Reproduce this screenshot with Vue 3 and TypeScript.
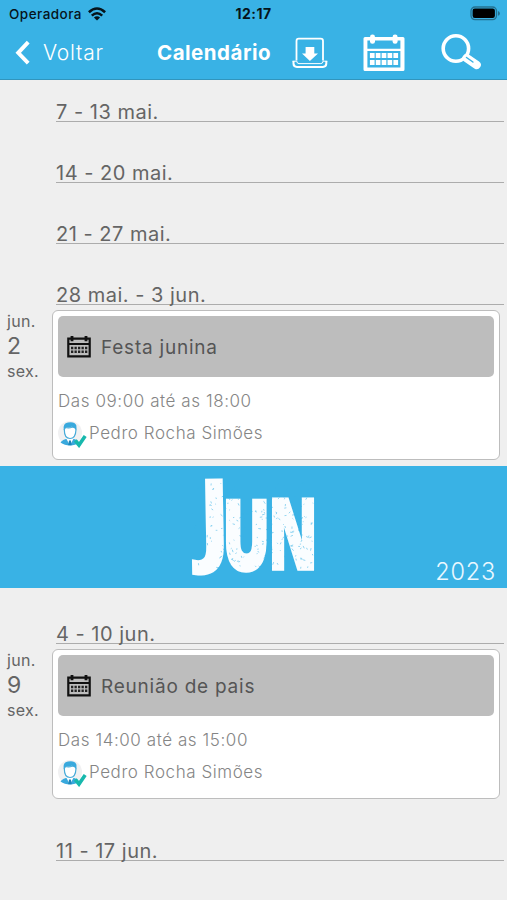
<script setup lang="ts">
interface CalendarEvent {
  month: string
  day: number
  weekday: string
  title: string
  time: string
  author: string
}
interface Week {
  label: string
  size?: 'first' | 'short'
  event?: CalendarEvent
  monthAfter?: boolean
}

const weeks: Week[] = [
  { label: '7 - 13 mai.', size: 'first' },
  { label: '14 - 20 mai.' },
  { label: '21 - 27 mai.' },
  {
    label: '28 mai. - 3 jun.',
    event: { month: 'jun.', day: 2, weekday: 'sex.', title: 'Festa junina', time: 'Das 09:00 até as 18:00', author: 'Pedro Rocha Simões' },
    monthAfter: true,
  },
  {
    label: '4 - 10 jun.',
    size: 'short',
    event: { month: 'jun.', day: 9, weekday: 'sex.', title: 'Reunião de pais', time: 'Das 14:00 até as 15:00', author: 'Pedro Rocha Simões' },
  },
  { label: '11 - 17 jun.', size: 'short' },
]

// Worn-print flecks over the month lettering
let seed = 71
const random = () => {
  seed = (seed * 16807) % 2147483647
  return seed / 2147483647
}
const flecks = Array.from({ length: 260 }, () => ({
  x: (3 + random() * 120).toFixed(1),
  y: (4 + random() * 92).toFixed(1),
  angle: Math.round(random() * 180),
  length: (0.8 + random() * 2).toFixed(1),
}))
</script>

<template>
  <div class="screen">
    <header class="header">
      <div class="status">
        <div class="carrier">
          <span>Operadora</span>
          <svg width="18" height="14" viewBox="0 0 18 14">
            <g fill="none" stroke="#06141b" stroke-width="2.6">
              <path d="M.9 5.2Q9-2.2 17.1 5.2" />
              <path d="M3.8 8.6Q9 3.9 14.2 8.6" />
            </g>
            <path d="M9 13.4 5.9 10.5Q9 8 12.1 10.5Z" fill="#06141b" />
          </svg>
        </div>
        <span class="clock">12:17</span>
        <svg class="battery" width="31" height="15" viewBox="0 0 31 15">
          <rect x="1" y="1" width="25.5" height="12.6" rx="4" fill="none" stroke="#247190" stroke-width="1.3" />
          <rect x="2.6" y="2.6" width="22.3" height="9.4" rx="2.2" fill="#000" />
          <path d="M28 5v4.8q1.9-.8 1.9-2.4T28 5Z" fill="#247190" />
        </svg>
      </div>
      <nav class="nav">
        <div class="back">
          <svg width="16" height="26" viewBox="0 0 16 26"><path d="M13.2 2.2 3.2 12.8l10 10.4" fill="none" stroke="#fff" stroke-width="3.9" /></svg>
          <span>Voltar</span>
        </div>
        <h1>Calendário</h1>
        <svg class="download" width="36" height="32" viewBox="0 0 36 32">
          <path d="M4.500 23.500V4q0-2.300 2.300-2.300h21.900q2.300 0 2.300 2.300v19.500" fill="none" stroke="#fff" stroke-width="1.800" />
          <path d="M1.500 24v2.500q0 3.400 3.400 3.400h26q3.400 0 3.400-3.400V24" fill="none" stroke="#fff" stroke-width="2" />
          <path d="M.5 24.200h4.300q0 2.400 2.200 2.400h21.800q2.200 0 2.200-2.400h4.300" fill="none" stroke="#fff" stroke-width="1" />
          <path d="M13.600 10h8.700v6.500h3.700L17.900 24 10 16.500h3.600Z" fill="#fff" />
        </svg>
        <svg class="cal" width="42" height="38" viewBox="0 0 42 38">
          <path fill="#fff" fill-rule="evenodd" d="M2 3h38q1.500 0 1.500 1.500v31q0 1.500-1.500 1.500H2Q.5 37 .5 35.500v-31Q.5 3 2 3ZM4.400 6.500v8.200h33V6.500ZM4.400 17v16.500h33V17Z" />
          <rect x="7" y="0.500" width="5" height="9.300" rx="2.400" fill="#fff" /><rect x="29.600" y="0.500" width="5" height="9.300" rx="2.400" fill="#fff" />
          <path d="M6.900 21.400h28.200M6.900 28.400h28.200" stroke="#fff" stroke-width="5" stroke-dasharray="4.700 1.175" />
        </svg>
        <svg class="search" width="41" height="37" viewBox="0 0 41 37">
          <circle cx="14.900" cy="15.500" r="12.700" fill="none" stroke="#fff" stroke-width="3.600" />
          <path d="m25.500 25 10.200 7" stroke="#fff" stroke-width="8.200" stroke-linecap="round" />
          <path d="m25.500 24.500 6.400 4.500" stroke="#39b2e5" stroke-width="1.500" stroke-linecap="round" />
        </svg>
      </nav>
    </header>

    <main>
      <template v-for="week in weeks" :key="week.label">
        <div class="week" :class="week.size"><span>{{ week.label }}</span></div>
        <div v-if="week.event" class="entry">
          <div class="date">
            <span>{{ week.event.month }}</span>
            <strong>{{ week.event.day }}</strong>
            <span>{{ week.event.weekday }}</span>
          </div>
          <article class="card">
            <div class="title">
              <svg width="24" height="22" viewBox="0 0 24 22">
                <path d="M1.300 2.700h21.400v17.600H1.300ZM1.300 8h21.400" fill="none" stroke="#111" stroke-width="2.200" />
                <path d="M5 0v5.200M19 0v5.200" stroke="#111" stroke-width="2.800" />
                <path d="M4 12h16.500M4 15.800h16.500" stroke="#222" stroke-width="2.400" stroke-dasharray="2.300 1.200" />
              </svg>
              <h2>{{ week.event.title }}</h2>
            </div>
            <p class="time">{{ week.event.time }}</p>
            <p class="author">
              <svg width="29" height="28" viewBox="0 0 29 28">
                <circle cx="12" cy="13" r="12" fill="#f1f1f2" />
                <path d="M2.500 22.500q2-3 7-4h5q5 1 6.500 4-3.500 3-9 3t-9.500-3Z" fill="#39a9dd" />
                <path d="m8 18 3.900 7.500 4-7.500Z" fill="#fff" /><path d="m11 20.500-.8 4.800h3.500l-.8-4.800Z" fill="#1f86ba" />
                <path d="M6.300 9.500Q6.300 18.500 12 18.500T18 9.500Q17.800 7.500 14.500 7 11 8.500 7.500 7.500Z" fill="#fff" stroke="#46abd9" stroke-width="1.200" />
                <path d="M5.800 10Q4.600 3.200 10 2.500q6.500-1.300 8.300 2.700.5 2.200-.2 4.800-1.300-3-4.200-3.300-4 1-6.300.5-.8 1-1.800 2.800Z" fill="#39a9dd" />
                <path d="m17.300 20.500 3.700 4.600 6.200-9" fill="none" stroke="#17b8ad" stroke-width="3.600" />
              </svg>
              <span>{{ week.event.author }}</span>
            </p>
          </article>
        </div>
        <section v-if="week.monthAfter" class="month">
          <svg class="lettering" width="127" height="102" viewBox="0 0 127 102">
            <g class="letters">
              <text class="j" transform="translate(9 75.500) rotate(-1) scale(.88 1)">J</text>
              <text class="u" transform="translate(32.400 92.500) scale(.64 1)">U</text>
              <text class="n" transform="translate(78.600 92) scale(.6 1)">N</text>
            </g>
            <path v-for="(f, i) in flecks" :key="i" :d="`M${f.x} ${f.y}h${f.length}`" :transform="`rotate(${f.angle} ${f.x} ${f.y})`" stroke="#39b2e5" stroke-width=".5" />
          </svg>
          <span class="year">2023</span>
        </section>
      </template>
    </main>
  </div>
</template>

<style>
body { margin: 0; background: #efefef; }
</style>

<style scoped>
.screen { width: 507px; height: 900px; overflow: hidden; background: #efefef; color: #656565; font-family: Inter, "Open Sans", sans-serif; }
h1, h2, p { margin: 0; font-weight: 400; }
svg { display: block; flex: none; }
.header { box-sizing: border-box; height: 80px; background: #39b2e5; border-bottom: 1.500px solid #3195bd; color: #fff; }
.status { display: grid; grid-template-columns: 1fr auto 1fr; align-items: center; height: 27px; color: #06141b; }
.carrier { display: flex; align-items: center; gap: 6px; padding-left: 9px; font-size: 13.500px; letter-spacing: .47px; font-weight: 500; }
.clock { font-size: 14px; font-weight: 700; letter-spacing: .5px; }
.battery { justify-self: end; margin-right: 6px; }
.nav { display: flex; align-items: center; height: 51px; }
.back { display: flex; align-items: center; gap: 12px; width: 142px; padding-left: 15px; font-size: 21px; font-weight: 300; letter-spacing: .75px; }
h1 { width: 135px; font-size: 20.500px; font-weight: 700; letter-spacing: .5px; white-space: nowrap; }
.cal { margin-left: 35px; }
.search { margin-left: 36px; margin-top: -2px; }
.week { box-sizing: border-box; display: flex; align-items: flex-end; height: 61px; margin: 0 3px 0 56px; border-bottom: 1.500px solid #acacac; font-size: 20px; line-height: 18px; letter-spacing: .5px; white-space: nowrap; }
.week.first { height: 42px; }
.week.short { height: 56px; }
.entry { display: flex; box-sizing: border-box; height: 161px; padding-top: 5px; }
.date { display: flex; flex-direction: column; width: 45px; padding: 1px 0 0 7px; font-size: 16px; line-height: 20px; letter-spacing: .3px; }
.date strong { font-size: 23px; font-weight: 400; line-height: 30px; }
.card { box-sizing: border-box; width: 448px; height: 150px; padding: 5px; background: #fff; border: 1.500px solid #bdbdbd; border-radius: 6px; }
.title { display: flex; align-items: center; gap: 10px; box-sizing: border-box; height: 61px; padding-left: 9px; background: #bdbdbd; border-radius: 5px; color: #555; }
h2 { padding-top: 3px; font-size: 19px; line-height: 24px; letter-spacing: .77px; }
.time, .author { color: #858585; font-size: 17px; font-weight: 300; letter-spacing: .57px; }
.time { padding-top: 14px; line-height: 20px; }
.author { display: flex; align-items: center; gap: 2px; margin-top: 9px; height: 28px; }
.author span { margin-top: -3px; }
.month { position: relative; display: flex; justify-content: center; box-sizing: border-box; height: 122px; padding-top: 11px; background: #39b2e5; }
.lettering { overflow: visible; }
.letters { fill: #fafdff; stroke: #fafdff; font-family: "Open Sans", sans-serif; font-weight: 800; }
.j { font-size: 103px; stroke-width: 0; }
.u, .n { font-size: 98px; stroke-width: 3.500px; stroke-linejoin: miter; }
.year { position: absolute; right: 11px; bottom: 3px; color: #eaf8ff; font-size: 23.500px; font-weight: 300; line-height: 26px; letter-spacing: .8px; }
</style>
